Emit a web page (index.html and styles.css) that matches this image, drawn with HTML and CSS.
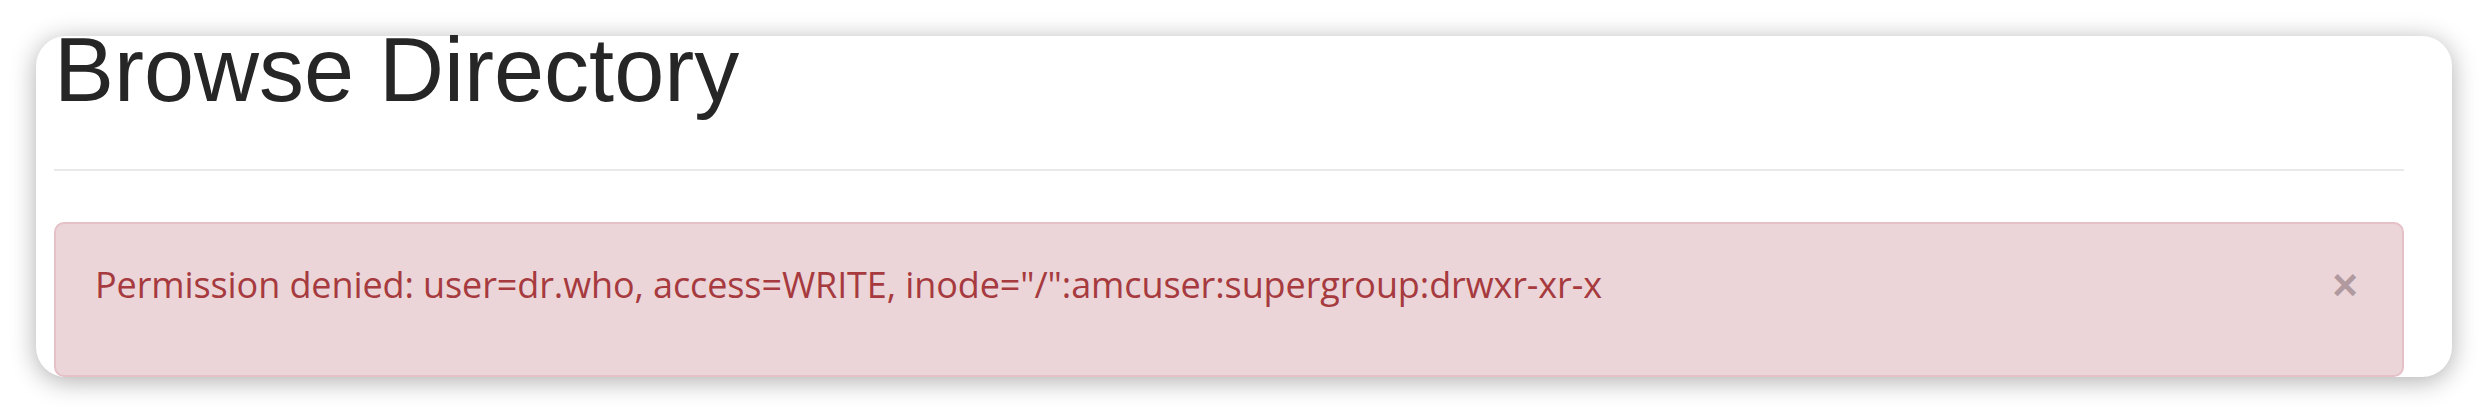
FILE: index.html
```html
<!DOCTYPE html>
<html lang="en">
<head>
<meta charset="utf-8">
<title>Browse Directory</title>
<link rel="stylesheet" href="styles.css">
</head>
<body>
<div class="card">
  <h1 class="title">Browse Directory</h1>
  <div class="rule"></div>
  <div class="alert">
    <span class="alert-text">Permission denied: user=dr.who, access=WRITE, inode="/":amcuser:supergroup:drwxr-xr-x</span>
    <button class="close" type="button" aria-label="Close">&times;</button>
  </div>
</div>
</body>
</html>
```
FILE: styles.css
```css
html, body {
  margin: 0;
  padding: 0;
  background: #ffffff;
}
body {
  width: 2488px;
  height: 414px;
  overflow: hidden;
}
.card {
  margin: 36px 36px 0 36px;
  height: 341px;
  box-sizing: border-box;
  padding: 2px 48px 0 18px;
  background: #ffffff;
  border-radius: 30px;
  box-shadow: 0 4px 26px rgba(0, 0, 0, 0.32);
}
.title {
  margin: 0;
  font-family: "Liberation Sans", Arial, sans-serif;
  font-weight: normal;
  font-size: 90px;
  line-height: 64px;
  color: #262626;
}
.rule {
  margin-top: 67px;
  height: 2px;
  background: #e9e9e9;
}
.alert {
  margin-top: 51px;
  display: flex;
  align-items: flex-start;
  justify-content: space-between;
  border: 2px solid #e5c0c6;
  border-radius: 10px;
  background: #ebd5d8;
  padding: 36px 44px 65px 39px;
}
.alert-text {
  font-family: "Open Sans", "Noto Sans", sans-serif;
  font-size: 36px;
  line-height: 50px;
  color: #a63a3e;
  letter-spacing: -0.1px;
}
.close {
  border: 0;
  background: transparent;
  padding: 0;
  margin: 0;
  font-family: "Liberation Sans", Arial, sans-serif;
  font-weight: bold;
  font-size: 44px;
  line-height: 50px;
  color: #b09aa0;
  cursor: pointer;
}
```
